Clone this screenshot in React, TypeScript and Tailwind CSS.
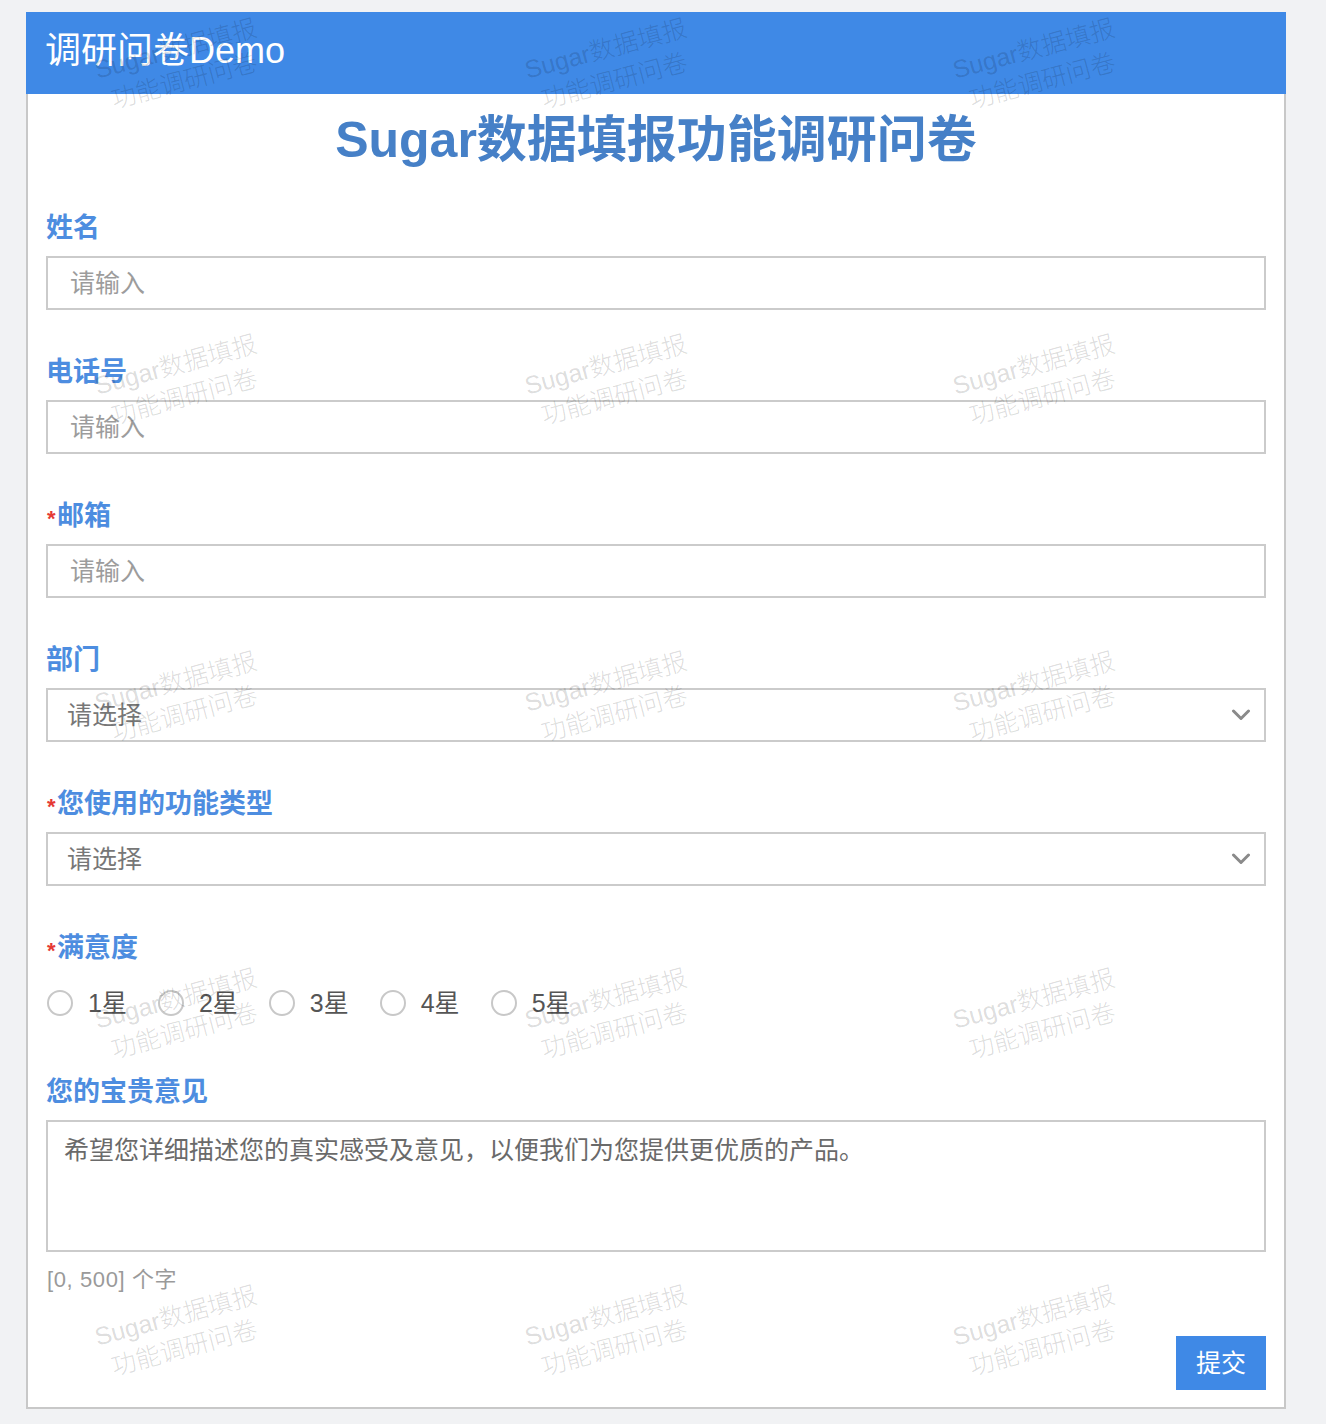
import React from "react";

const FONT = "font-['Liberation_Sans','Noto_Sans_CJK_SC',sans-serif]";

function Label({ text, required }: { text: string; required?: boolean }) {
  return (
    <div className="flex items-center h-[40px] mb-[8px]">
      {required && (
        <span className="text-[#e53935] text-[22px] font-bold leading-none w-[11px] pl-[1px] mt-[6px]">*</span>
      )}
      <span className="text-[27px] leading-[40px] font-bold text-[#4d8de0]">{text}</span>
    </div>
  );
}

function TextInput() {
  return (
    <input
      className={`block w-full h-[54px] border-2 border-[#cbcbcb] bg-white px-[22px] text-[25px] text-[#333] placeholder:text-[#9c9c9c] outline-none ${FONT}`}
      placeholder="请输入"
    />
  );
}

function SelectBox() {
  return (
    <div className="flex items-center justify-between w-full h-[54px] border-2 border-[#cbcbcb] bg-white pl-[19px] pr-[12px]">
      <span className="text-[25px] text-[#777] leading-none">请选择</span>
      <svg width="20" height="12" viewBox="0 0 20 12" fill="none" className="mr-[1px]">
        <path d="M2.5 2 L10 9.5 L17.5 2" stroke="#8a8a8a" strokeWidth="3" strokeLinecap="round" strokeLinejoin="round" />
      </svg>
    </div>
  );
}

function Field({ label, required, children }: { label: string; required?: boolean; children: React.ReactNode }) {
  return (
    <div className="flex flex-col">
      <Label text={label} required={required} />
      {children}
    </div>
  );
}

const stars = ["1星", "2星", "3星", "4星", "5星"];

function Watermarks() {
  const xs = [180, 610, 1038];
  const ys = [65, 381, 698, 1015, 1332];
  const items: { x: number; y: number }[] = [];
  ys.forEach((y) => xs.forEach((x) => items.push({ x, y })));
  return (
    <div className="absolute inset-0 pointer-events-none overflow-hidden">
      {items.map((p, i) => (
        <div
          key={i}
          className="absolute -translate-x-1/2 -translate-y-1/2 -rotate-[15deg] flex flex-col items-center text-[25px] leading-[33px] font-light text-black/[0.15] whitespace-nowrap"
          style={{ left: p.x, top: p.y }}
        >
          <span>Sugar数据填报</span>
          <span>功能调研问卷</span>
        </div>
      ))}
    </div>
  );
}

export default function App() {
  return (
    <div className={`relative min-h-[1424px] bg-[#f1f2f4] pt-[12px] pb-[15px] ${FONT}`}>
      <div className="ml-[26px] w-[1260px]">
        <div className="h-[82px] bg-[#3f89e6] flex items-center pl-[19px]">
          <span className="text-white text-[36px] leading-none mt-[-4px]">调研问卷Demo</span>
        </div>
        <div className="bg-white border-x-2 border-b-2 border-[#c8c8c8] px-[18px] pt-[16px] pb-[17px]">
          <h1 className="text-center text-[50px] leading-[60px] font-bold text-[#4680c7]">
            Sugar数据填报功能调研问卷
          </h1>
          <div className="mt-[38px] flex flex-col gap-[42px]">
            <Field label="姓名">
              <TextInput />
            </Field>
            <Field label="电话号">
              <TextInput />
            </Field>
            <Field label="邮箱" required>
              <TextInput />
            </Field>
            <Field label="部门">
              <SelectBox />
            </Field>
            <Field label="您使用的功能类型" required>
              <SelectBox />
            </Field>
            <Field label="满意度" required>
              <div className="flex items-center h-[54px] pl-[1px]">
                {stars.map((s) => (
                  <div key={s} className="flex items-center mr-[31px]">
                    <span className="w-[26px] h-[26px] rounded-full border-2 border-[#c8c8c8] bg-white" />
                    <span className="ml-[15px] text-[25px] leading-none text-[#555]">{s}</span>
                  </div>
                ))}
              </div>
            </Field>
            <Field label="您的宝贵意见">
              <textarea
                className={`block w-full h-[132px] border-2 border-[#cbcbcb] bg-white px-[16px] py-[12px] text-[25px] leading-[32px] text-[#333] placeholder:text-[#6a6a6a] outline-none resize-none ${FONT}`}
                placeholder="希望您详细描述您的真实感受及意见，以便我们为您提供更优质的产品。"
              />
              <div className="mt-[12px] h-[32px] leading-[32px] text-[22px] tracking-[0.6px] text-[#9a9a9a] pl-[1px]">[0, 500] 个字</div>
            </Field>
          </div>
          <div className="flex justify-end mt-[40px]">
            <button className="w-[90px] h-[54px] bg-[#3f89e6] text-white text-[25px] leading-none">提交</button>
          </div>
        </div>
      </div>
      <Watermarks />
    </div>
  );
}
